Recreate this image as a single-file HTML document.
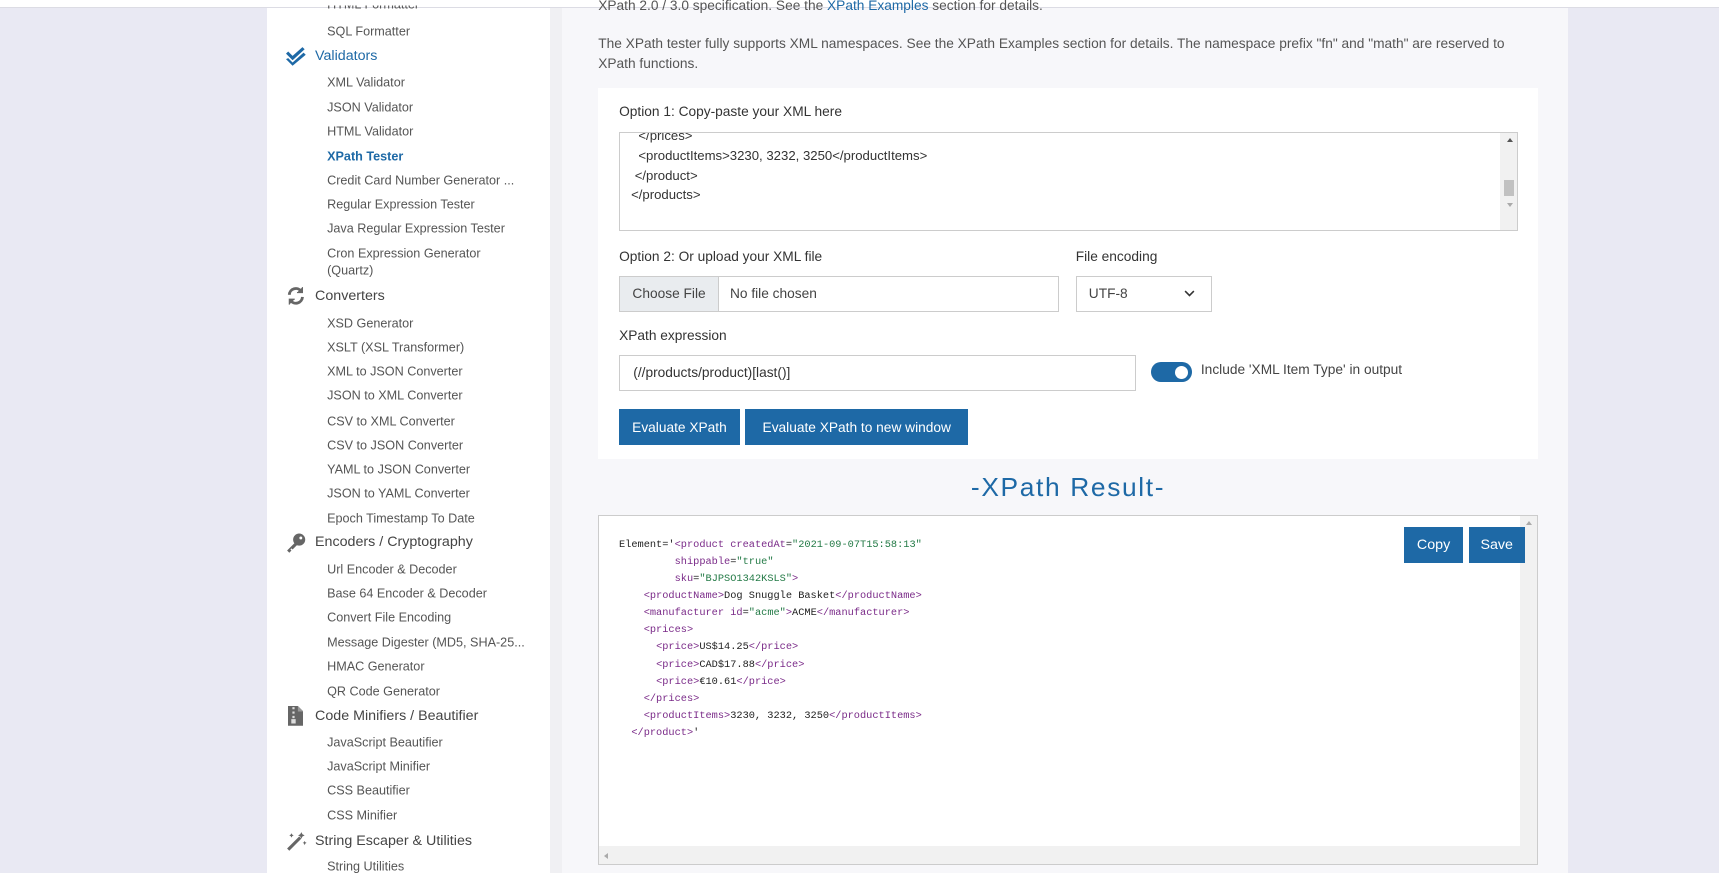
<!DOCTYPE html>
<html><head><meta charset="utf-8"><style>
html,body{margin:0;padding:0;width:1719px;height:873px;overflow:hidden;background:#e9e9f3;font-family:"Liberation Sans",sans-serif}
#w{position:relative;width:1566px;height:796px;zoom:1.0977;}
.a{position:absolute;white-space:nowrap}
.si{position:absolute;left:298px;font-size:11.5px;color:#555;line-height:14px;transform:translateY(-7px)}
.cat{position:absolute;left:287px;font-size:13px;color:#444;transform:translateY(-8px)}
.ic{position:absolute;left:261px}
.lbl{font-size:12.5px;color:#333}
.btn{position:absolute;background:#1e69a6;color:#fff;font-size:12.5px;display:flex;align-items:center;justify-content:center}
pre{margin:0;font-family:"Liberation Mono",monospace;font-size:9.4px;line-height:15.6px;color:#222}
.t{color:#7a2a88}.v{color:#237a46}
</style></head><body><div id="w">
<div class="a" style="left:0;top:0;width:1566px;height:6px;background:#fff;border-bottom:1px solid #dcdce4"></div>
<div class="a" style="left:243px;top:7px;width:258px;height:789px;background:#fff"></div>
<div class="a" style="left:501px;top:7px;width:11px;height:789px;background:#f0f0f3"></div>
<div class="a" style="left:512px;top:7px;width:916px;height:789px;background:#f7f7fa"></div>

<!-- sidebar -->
<div class="si" style="top:5px;clip-path:inset(7px 0 0 0)">HTML Formatter</div>
<div class="si" style="top:29px">SQL Formatter</div>
<svg class="ic" style="top:42px" width="20" height="18" viewBox="0 0 20 18"><path d="M2 5l4 4 9-8 2 2-11 10-6-6z" fill="#1e69a6"/><path d="M2 11l4 4 10-9 2 2-12 10-6-6z" fill="#1e69a6"/></svg>
<div class="cat" style="top:52px;color:#1e69a6">Validators</div>
<div class="si" style="top:76px">XML Validator</div>
<div class="si" style="top:98px">JSON Validator</div>
<div class="si" style="top:120px">HTML Validator</div>
<div class="si" style="top:143px;color:#1e69a6;font-weight:bold">XPath Tester</div>
<div class="si" style="top:165px">Credit Card Number Generator ...</div>
<div class="si" style="top:187px">Regular Expression Tester</div>
<div class="si" style="top:209px">Java Regular Expression Tester</div>
<div class="si" style="top:231px">Cron Expression Generator</div>
<div class="si" style="top:247px">(Quartz)</div>
<svg class="ic" style="top:261px" width="18" height="18" viewBox="0 0 18 18" fill="none" stroke="#666" stroke-width="2.6"><path d="M3 8a6 6 0 0 1 11-3"/><path d="M15 10a6 6 0 0 1-11 3"/><path d="M15 1v5h-5" fill="#666" stroke-width="1"/><path d="M3 17v-5h5" fill="#666" stroke-width="1"/></svg>
<div class="cat" style="top:271px">Converters</div>
<div class="si" style="top:295px">XSD Generator</div>
<div class="si" style="top:317px">XSLT (XSL Transformer)</div>
<div class="si" style="top:339px">XML to JSON Converter</div>
<div class="si" style="top:361px">JSON to XML Converter</div>
<div class="si" style="top:384px">CSV to XML Converter</div>
<div class="si" style="top:406px">CSV to JSON Converter</div>
<div class="si" style="top:428px">YAML to JSON Converter</div>
<div class="si" style="top:450px">JSON to YAML Converter</div>
<div class="si" style="top:473px">Epoch Timestamp To Date</div>
<svg class="ic" style="top:486px" width="18" height="18" viewBox="0 0 18 18"><circle cx="12" cy="6" r="5.5" fill="#666"/><path d="M8 9l-7 7 2 2 2-2-1-1 1-1 1 1 5-5z" fill="#666"/><circle cx="13.5" cy="4.5" r="1.3" fill="#fff"/></svg>
<div class="cat" style="top:495px">Encoders / Cryptography</div>
<div class="si" style="top:519px">Url Encoder &amp; Decoder</div>
<div class="si" style="top:541px">Base 64 Encoder &amp; Decoder</div>
<div class="si" style="top:563px">Convert File Encoding</div>
<div class="si" style="top:586px">Message Digester (MD5, SHA-25...</div>
<div class="si" style="top:608px">HMAC Generator</div>
<div class="si" style="top:630px">QR Code Generator</div>
<svg class="ic" style="top:643px;left:262px" width="14" height="18" viewBox="0 0 14 18"><path d="M0 0h9l5 5v13H0z" fill="#666"/><path d="M9 0v5h5" fill="#999"/><path d="M4 1h2v2H4zM4 5h2v2H4zM4 9h2v2H4zM3 12h4v4H3z" fill="#ddd"/></svg>
<div class="cat" style="top:653px">Code Minifiers / Beautifier</div>
<div class="si" style="top:677px">JavaScript Beautifier</div>
<div class="si" style="top:699px">JavaScript Minifier</div>
<div class="si" style="top:721px">CSS Beautifier</div>
<div class="si" style="top:743px">CSS Minifier</div>
<svg class="ic" style="top:757px" width="19" height="19" viewBox="0 0 19 19"><path d="M1 16L12 5l2 2L3 18z" fill="#666"/><path d="M14 1l1 2 2 1-2 1-1 2-1-2-2-1 2-1zM5 2l.7 1.3L7 4l-1.3.7L5 6l-.7-1.3L3 4l1.3-.7zM17 9l.6 1.2 1.2.6-1.2.6L17 13l-.6-1.6-1.2-.6 1.2-.6z" fill="#666"/></svg>
<div class="cat" style="top:767px">String Escaper &amp; Utilities</div>
<div class="si" style="top:790px">String Utilities</div>

<!-- main text -->
<div class="a" style="left:545px;top:-2px;font-size:12.5px;color:#555">XPath 2.0 / 3.0 specification. See the <span style="color:#1e69a6">XPath Examples</span> section for details.</div>
<div class="a" style="left:545px;top:31px;font-size:12.5px;color:#555;line-height:18px;white-space:normal;width:860px">The XPath tester fully supports XML namespaces. See the XPath Examples section for details. The namespace prefix "fn" and "math" are reserved to XPath functions.</div>

<!-- card -->
<div class="a" style="left:545px;top:80px;width:856px;height:338px;background:#fff"></div>
<div class="a lbl" style="left:564px;top:95px">Option 1: Copy-paste your XML here</div>
<div class="a" style="left:564px;top:120px;width:817px;height:89px;border:1px solid #ccc;background:#fff;overflow:hidden">
 <div style="position:absolute;left:10px;top:-6px;font-size:12px;color:#333;line-height:18px;white-space:pre">  &lt;/prices&gt;
  &lt;productItems&gt;3230, 3232, 3250&lt;/productItems&gt;
 &lt;/product&gt;
&lt;/products&gt;</div>
 <div style="position:absolute;right:0;top:0;width:15px;height:89px;background:#f1f1f1"></div>
 <div style="position:absolute;right:4px;top:5px;width:0;height:0;border:3.5px solid transparent;border-bottom:4px solid #555;border-top:0"></div>
 <div style="position:absolute;right:3px;top:43px;width:9px;height:15px;background:#c1c1c1"></div>
 <div style="position:absolute;right:4px;top:64px;width:0;height:0;border:3.5px solid transparent;border-top:4px solid #aaa;border-bottom:0"></div>
</div>
<div class="a lbl" style="left:564px;top:227px">Option 2: Or upload your XML file</div>
<div class="a" style="left:564px;top:251px;width:399px;height:31px;border:1px solid #ccc;background:#fff"></div>
<div class="a" style="left:565px;top:252px;width:89px;height:31px;background:#e9ecef;border-right:1px solid #ccc;font-size:12.5px;color:#444;line-height:31px;text-align:center">Choose File</div>
<div class="a" style="left:665px;top:252px;font-size:12.5px;color:#444;line-height:31px">No file chosen</div>
<div class="a lbl" style="left:980px;top:227px">File encoding</div>
<div class="a" style="left:980px;top:251px;width:122px;height:31px;border:1px solid #ccc;background:#fff;font-size:12.5px;color:#444;line-height:31px"><span style="margin-left:11px">UTF-8</span></div>
<svg class="a" style="left:1079px;top:264px" width="10" height="7" viewBox="0 0 10 7"><path d="M1 1l4 4 4-4" stroke="#333" stroke-width="1.4" fill="none"/></svg>
<div class="a lbl" style="left:564px;top:299px">XPath expression</div>
<div class="a" style="left:564px;top:323px;width:469px;height:31px;border:1px solid #ccc;background:#fff;font-size:12.5px;color:#333;line-height:31px"><span style="margin-left:12px">(//products/product)[last()]</span></div>
<div class="a" style="left:1049px;top:330px;width:37px;height:18px;border-radius:9px;background:#1e69a6"></div>
<div class="a" style="left:1070px;top:333px;width:12px;height:12px;border-radius:6px;background:#fff"></div>
<div class="a lbl" style="left:1094px;top:330px;color:#444">Include 'XML Item Type' in output</div>
<div class="btn" style="left:564px;top:373px;width:110px;height:32px">Evaluate XPath</div>
<div class="btn" style="left:679px;top:373px;width:203px;height:32px">Evaluate XPath to new window</div>

<div class="a" style="left:545px;width:856px;top:430px;text-align:center;font-size:24px;color:#1e69a6;letter-spacing:1.5px">-XPath Result-</div>

<!-- result -->
<div class="a" style="left:545px;top:469px;width:854px;height:317px;border:1px solid #ccc;background:#fff;overflow:hidden">
 <pre style="position:absolute;left:18px;top:19px">Element='<span class="t">&lt;product</span> <span class="t">createdAt</span>=<span class="v">"2021-09-07T15:58:13"</span>
         <span class="t">shippable</span>=<span class="v">"true"</span>
         <span class="t">sku</span>=<span class="v">"BJPSO1342KSLS"</span><span class="t">&gt;</span>
    <span class="t">&lt;productName&gt;</span>Dog Snuggle Basket<span class="t">&lt;/productName&gt;</span>
    <span class="t">&lt;manufacturer</span> <span class="t">id</span>=<span class="v">"acme"</span><span class="t">&gt;</span>ACME<span class="t">&lt;/manufacturer&gt;</span>
    <span class="t">&lt;prices&gt;</span>
      <span class="t">&lt;price&gt;</span>US$14.25<span class="t">&lt;/price&gt;</span>
      <span class="t">&lt;price&gt;</span>CAD$17.88<span class="t">&lt;/price&gt;</span>
      <span class="t">&lt;price&gt;</span>€10.61<span class="t">&lt;/price&gt;</span>
    <span class="t">&lt;/prices&gt;</span>
    <span class="t">&lt;productItems&gt;</span>3230, 3232, 3250<span class="t">&lt;/productItems&gt;</span>
  <span class="t">&lt;/product&gt;</span>'</pre>
 <div style="position:absolute;right:0;top:0;width:15px;height:301px;background:#f1f1f1"></div>
 <div style="position:absolute;left:0;bottom:0;width:854px;height:16px;background:#f1f1f1"></div>
 <div style="position:absolute;right:4px;top:5px;border:3.5px solid transparent;border-bottom:4px solid #aaa;border-top:0"></div>
 <div style="position:absolute;left:4px;bottom:4px;border:3.5px solid transparent;border-right:4px solid #aaa;border-left:0"></div>
</div>
<div class="btn" style="left:1279px;top:480px;width:54px;height:33px;font-size:13px">Copy</div>
<div class="btn" style="left:1338px;top:480px;width:51px;height:33px;font-size:13px">Save</div>
</div></body></html>
